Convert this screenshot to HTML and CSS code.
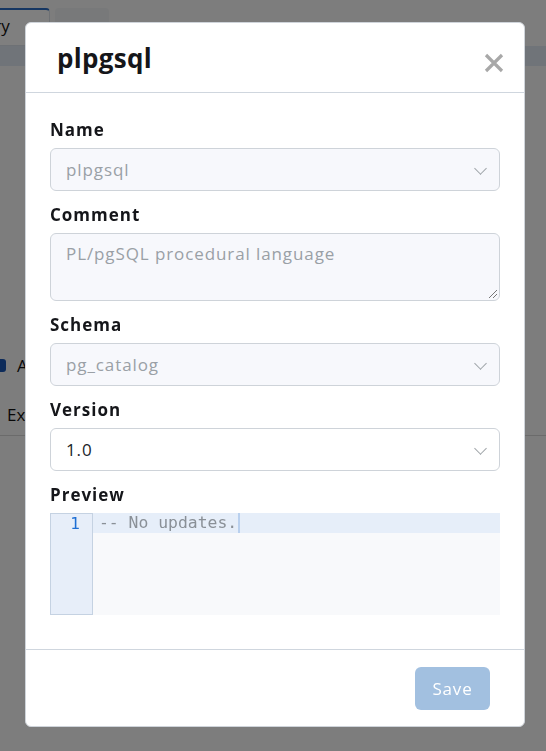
FILE: index.html
```html
<!DOCTYPE html>
<html>
<head>
<meta charset="utf-8">
<link rel="stylesheet" href="styles.css">
</head>
<body>
<div class="page">
  <div class="tabs">
    <div class="tab tab-active">Query</div>
    <div class="tab tab-other"></div>
  </div>
  <div class="band"></div>
  <div class="page-body">
    <label class="check-row"><span class="check"></span><span>Auto</span></label>
    <div class="ex-row">Ex</div>
  </div>
</div>

<div class="backdrop">
  <div class="modal">
    <div class="modal-header">
      <h1 class="modal-title">plpgsql</h1>
      <button class="close" aria-label="Close">
        <svg width="20" height="20" viewBox="0 0 20 20"><path d="M2 2 L18 18 M18 2 L2 18" stroke="#a8a8a8" stroke-width="3.2" stroke-linecap="butt"/></svg>
      </button>
    </div>
    <div class="modal-body">
      <div class="field">
        <div class="label">Name</div>
        <div class="control select disabled">plpgsql<span class="chev"></span></div>
      </div>
      <div class="field">
        <div class="label">Comment</div>
        <div class="control textarea disabled">PL/pgSQL procedural language<span class="grip"></span></div>
      </div>
      <div class="field">
        <div class="label">Schema</div>
        <div class="control select disabled">pg_catalog<span class="chev"></span></div>
      </div>
      <div class="field">
        <div class="label">Version</div>
        <div class="control select enabled">1.0<span class="chev"></span></div>
      </div>
      <div class="field">
        <div class="label">Preview</div>
        <div class="editor">
          <div class="gutter"><div class="ln">1</div></div>
          <div class="code">
            <div class="line active">-- No updates.<span class="cursor"></span></div>
          </div>
        </div>
      </div>
    </div>
    <div class="modal-footer">
      <button class="save">Save</button>
    </div>
  </div>
</div>
</body>
</html>
```

FILE: styles.css
```css
* { box-sizing: border-box; }
html, body { margin: 0; padding: 0; }
body {
  width: 546px;
  height: 751px;
  overflow: hidden;
  background: #fafafa;
  font-family: "Open Sans", "Liberation Sans", sans-serif;
}
.page { height: 751px; }
.tabs {
  display: flex;
  gap: 5px;
  padding-top: 8px;
  margin-left: -40px;
  height: 46px;
}
.tab {
  height: 38px;
  border-radius: 4px 4px 0 0;
  font-size: 17px;
  line-height: 32px;
  color: #111;
}
.tab-active {
  width: 90px;
  border: 1px solid #dde3ea;
  border-top: 2px solid #2b6cc4;
  background: #fff;
  padding-left: 0;
}
.tab-other {
  width: 54px;
  background: #f0f2f4;
}
.band { height: 20px; background: #e0e8f2; }
.page-body { padding-top: 289px; font-size: 17px; color: #111; }
.check-row { display: flex; align-items: center; gap: 11px; margin-left: -7px; height: 20px; }
.check { width: 13px; height: 13px; border-radius: 3px; background: #1a56b5; display: inline-block; }
.ex-row { margin-top: 30px; padding-left: 7px; height: 31px; border-bottom: 1px solid #d6d6d6; line-height: 20px; }

.backdrop {
  position: fixed;
  inset: 0;
  background: rgba(0, 0, 0, 0.5);
}
.modal {
  position: absolute;
  left: 25px;
  top: 22px;
  width: 500px;
  height: 705px;
  background: #fff;
  border-radius: 6px;
  display: flex;
  flex-direction: column;
  border: 1px solid #cfd4da;
}
.modal-header {
  height: 70px;
  border-bottom: 1px solid #cfd6de;
  display: flex;
  align-items: center;
  justify-content: space-between;
  padding: 0 20px 0 31px;
}
.modal-title {
  margin: 0;
  font-size: 26px;
  font-weight: 700;
  color: #15161a;
  letter-spacing: 0.3px;
}
.close {
  border: 0;
  background: none;
  padding: 0;
  margin-top: 10px;
  width: 20px;
  height: 20px;
  display: flex;
}
.modal-body {
  padding: 25px 24px 0 24px;
  flex: 1;
}
.field { margin-bottom: 12px; }
.label {
  font-size: 17px;
  font-weight: 700;
  line-height: 24px;
  color: #15161a;
  margin-bottom: 6px;
  letter-spacing: 1px;
}
.control {
  position: relative;
  height: 43px;
  border: 1px solid #ced3d9;
  border-radius: 6px;
  padding: 0 15px;
  font-size: 17px;
  line-height: 41px;
  color: #212529;
  letter-spacing: 0.9px;
}
.control.disabled { background: #f7f8fc; color: #9aa0a6; }
.control.enabled { background: #fff; color: #212529; }
.textarea { height: 68px; line-height: 24px; padding-top: 8px; }
.chev {
  position: absolute;
  right: 14px;
  top: 15px;
  width: 9px;
  height: 9px;
  border-right: 1.8px solid #9ea3a8;
  border-bottom: 1.8px solid #9ea3a8;
  transform: rotate(45deg);
}
.grip {
  position: absolute;
  right: 2px;
  bottom: 2px;
  width: 8px;
  height: 8px;
  background: linear-gradient(135deg, transparent 45%, #777 45%, #777 55%, transparent 55%, transparent 70%, #777 70%, #777 80%, transparent 80%);
}
.editor {
  display: flex;
  height: 102px;
  background: #f8f9fb;
}
.gutter {
  width: 43px;
  background: #e7eef9;
  border: 1px solid #c5d2e2;
}
.ln {
  text-align: right;
  padding-right: 12px;
  font-family: "DejaVu Sans Mono", monospace;
  font-size: 16px;
  line-height: 20px;
  color: #1e6fd4;
}
.code { flex: 1; font-family: "DejaVu Sans Mono", monospace; font-size: 16.4px; }
.line {
  height: 20px;
  line-height: 20px;
  padding-left: 6px;
  color: #8a9097;
  display: flex;
  align-items: center;
}
.line.active { background: #e6eef9; }
.cursor { display: inline-block; width: 2px; height: 20px; background: #b9d0ee; margin-left: 1px; }
.modal-footer {
  height: 77px;
  border-top: 1px solid #cfd6de;
  display: flex;
  justify-content: flex-end;
  align-items: center;
  padding-right: 34px;
}
.save {
  width: 75px;
  height: 43px;
  border: 0;
  border-radius: 6px;
  background: #a2c0e0;
  color: #fff;
  font-family: "Open Sans", "Liberation Sans", sans-serif;
  font-size: 17px;
  letter-spacing: 0.8px;
}
```
